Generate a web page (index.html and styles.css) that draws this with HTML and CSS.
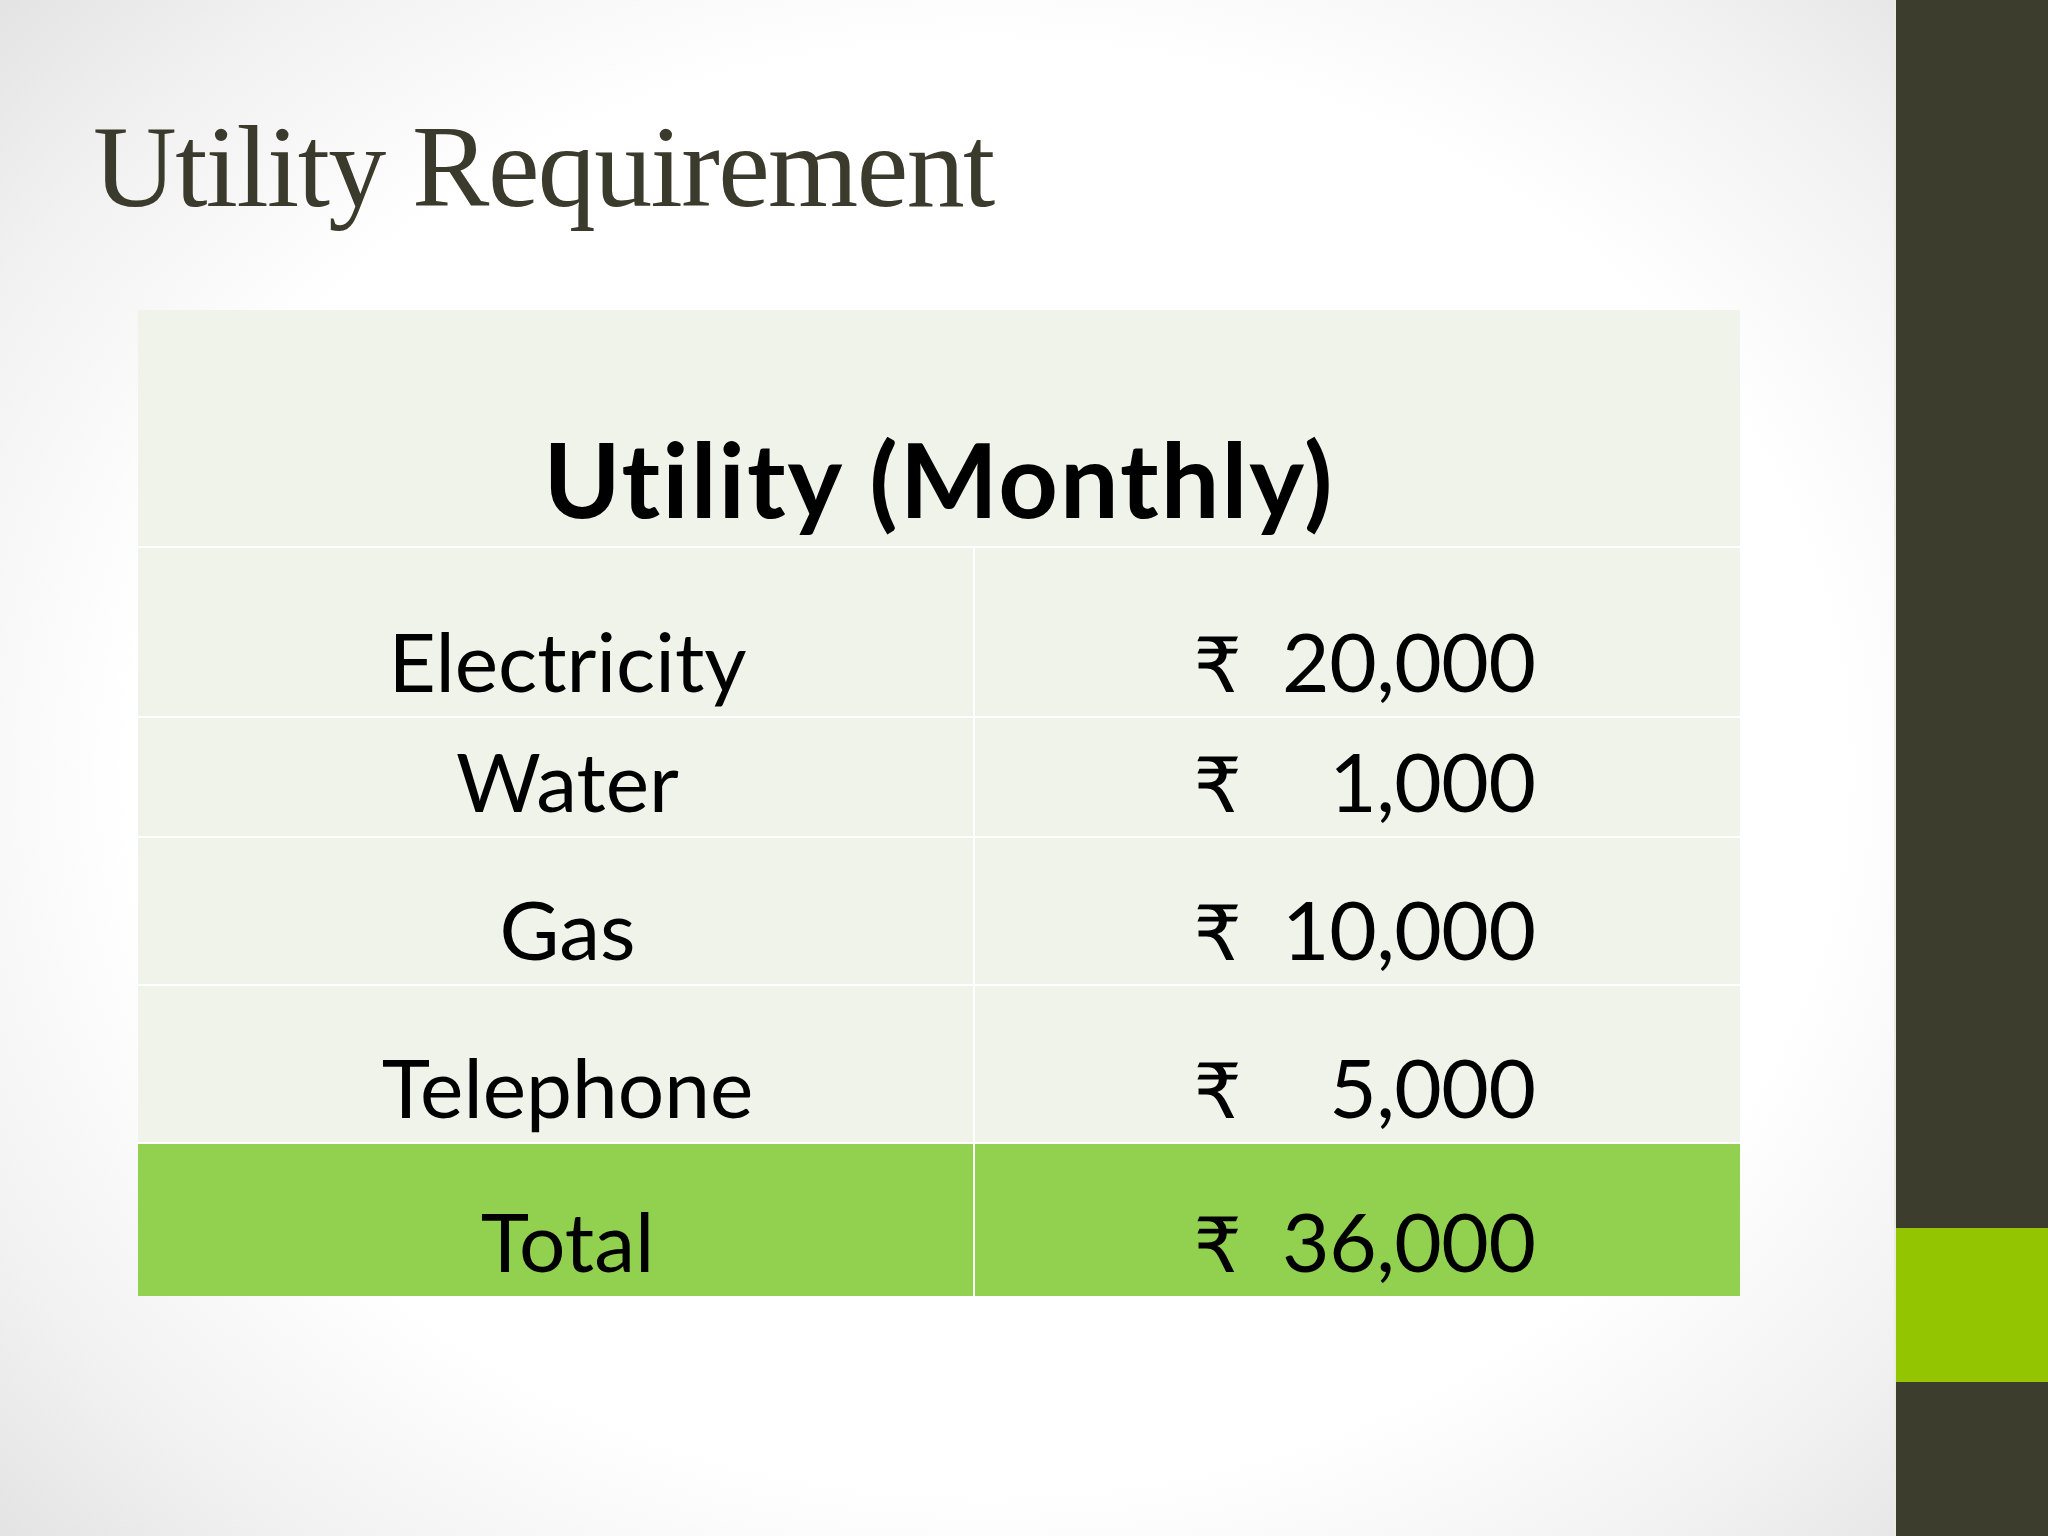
FILE: index.html
```html
<!DOCTYPE html>
<html>
<head>
<meta charset="utf-8">
<title>Utility Requirement</title>
<link rel="stylesheet" href="styles.css">
</head>
<body>
<div class="slide">
  <main class="content">
    <h1 class="title">Utility Requirement</h1>
    <div class="table">
      <div class="cell head">Utility (Monthly)</div>

      <div class="cell label r1">Electricity</div>
      <div class="cell value r1"><span class="amt"><span class="cur">₹</span><span class="num">20,000</span></span></div>

      <div class="cell label r2">Water</div>
      <div class="cell value r2"><span class="amt"><span class="cur">₹</span><span class="num">1,000</span></span></div>

      <div class="cell label r3">Gas</div>
      <div class="cell value r3"><span class="amt"><span class="cur">₹</span><span class="num">10,000</span></span></div>

      <div class="cell label r4">Telephone</div>
      <div class="cell value r4"><span class="amt"><span class="cur">₹</span><span class="num">5,000</span></span></div>

      <div class="cell label total">Total</div>
      <div class="cell value total"><span class="amt"><span class="cur">₹</span><span class="num">36,000</span></span></div>
    </div>
  </main>
  <aside class="sidebar">
    <div class="bar-dark top"></div>
    <div class="bar-green"></div>
    <div class="bar-dark bottom"></div>
  </aside>
</div>
</body>
</html>
```

FILE: styles.css
```css
html, body {
  margin: 0;
  padding: 0;
}

body {
  width: 2048px;
  height: 1536px;
  overflow: hidden;
  background: #ffffff;
}

.slide {
  display: flex;
  width: 2048px;
  height: 1536px;
}

.content {
  flex: 1;
  box-sizing: border-box;
  padding: 109px 0 0 0;
  background: radial-gradient(ellipse 75% 78% at 52% 50%, #ffffff 60%, #f1f1f1 80%, #dedede 100%);
  border-right: 2px solid #e9ece0;
}

.title {
  margin: 0 0 85px 93px;
  font-family: "Liberation Serif", "Times New Roman", serif;
  font-weight: normal;
  font-size: 116px;
  line-height: 116px;
  height: 116px;
  letter-spacing: -1.6px;
  color: #3b3b2d;
}

.table {
  margin-left: 138px;
  width: 1602px;
  display: grid;
  grid-template-columns: 835px 765px;
  grid-template-rows: 236px 168px 118px 146px 156px 152px;
  gap: 2px;
  background: #ffffff;
  font-family: Lato, "Noto Sans", "DejaVu Sans", sans-serif;
  color: #000000;
}

.cell {
  display: flex;
  align-items: flex-end;
  justify-content: center;
  background: #eff3e9;
  font-size: 82px;
  line-height: 1;
  padding-bottom: 15px;
  box-sizing: border-box;
}

.head {
  grid-column: 1 / 3;
  font-weight: bold;
  font-size: 104px;
  padding-bottom: 16px;
  letter-spacing: 2px;
}

.label {
  padding-left: 24px;
}

.value {
  padding-left: 14px;
}

.total {
  background: #92d050;
}

.amt {
  display: flex;
  justify-content: space-between;
  align-items: baseline;
  width: 342px;
}

.cur {
  display: inline-block;
  font-family: "DejaVu Sans", "Noto Sans", sans-serif;
  font-size: 76px;
  line-height: 0.7;
}

.num {
  letter-spacing: -0.5px;
}

.sidebar {
  width: 152px;
  display: flex;
  flex-direction: column;
}

.bar-dark {
  background: #3d3d2e;
}

.bar-dark.top {
  height: 1228px;
}

.bar-green {
  height: 154px;
  background: #93c500;
}

.bar-dark.bottom {
  flex: 1;
}
```
